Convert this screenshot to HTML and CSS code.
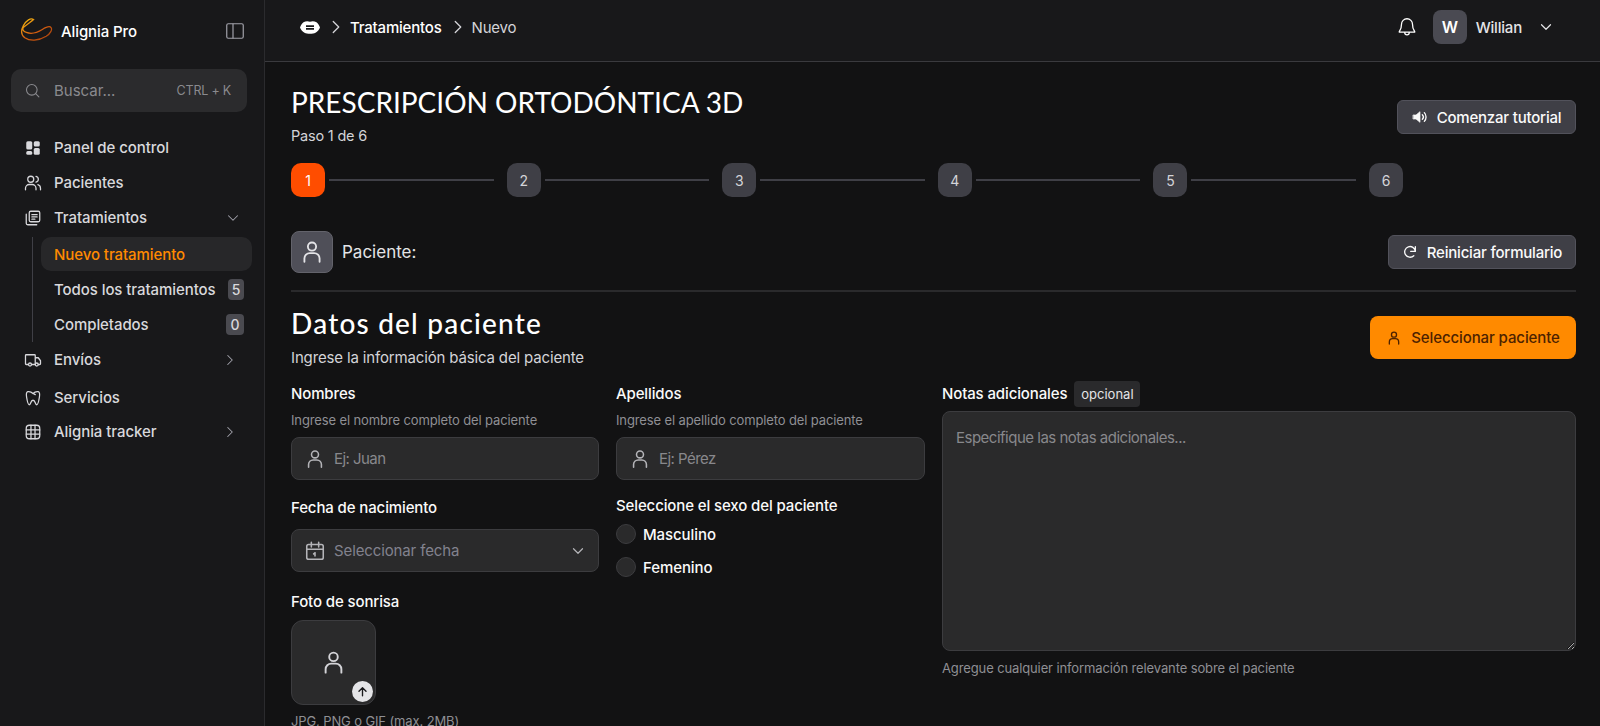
FILE: index.html
```html
<!DOCTYPE html>
<html lang="es">
<head>
<meta charset="utf-8">
<title>Alignia Pro</title>
<link rel="stylesheet" href="styles.css">
</head>
<body>
<svg class="sprite" width="0" height="0" aria-hidden="true">
  <defs>
    <symbol id="user" viewBox="0 0 24 24"><circle cx="12" cy="7" r="3.800"/><path d="M5 21v-3a5 5 0 0 1 5-5h4a5 5 0 0 1 5 5v3"/></symbol>
    <symbol id="right" viewBox="0 0 24 24"><path d="m9 6 6 6-6 6"/></symbol>
    <symbol id="down" viewBox="0 0 24 24"><path d="m6 9 6 6 6-6"/></symbol>
    <linearGradient id="logoGrad" x1="0" y1="0" x2="1" y2="1"><stop offset="0" stop-color="#f2c010"/><stop offset=".5" stop-color="#d8600f"/><stop offset="1" stop-color="#a03c0c"/></linearGradient>
  </defs>
</svg>
<aside class="sidebar">
  <div class="brand">
    <svg class="logo" viewBox="0 0 34 26" fill="none" stroke="url(#logoGrad)" stroke-width="1.300"><path d="M14 2.200C11 .2 6.500 3 3.500 8.500 .8 13.500 1 18 5 21c5 3.500 14 3.500 22-1.500 4.500-3 6.500-7 5-9-1.500-2-5-.5-9 2-4.500 2.800-11 5-16.500 3C3 14.500 2 11.500 4 10c3-2.500 8-6 10-7.800z"/></svg>
    <span class="brand-name">Alignia Pro</span>
    <svg class="ico panel-toggle" viewBox="0 0 18 16"><rect x=".75" y=".75" width="16.500" height="14.500" rx="1.500"/><path d="M7 1v14"/></svg>
  </div>
  <div class="search">
    <svg class="ico search-ico" viewBox="0 0 24 24"><circle cx="11" cy="11" r="7.500"/><path d="m21 21-4.500-4.500"/></svg>
    <span class="search-text">Buscar...</span>
    <span class="search-key">CTRL + K</span>
  </div>
  <nav class="nav">
    <a class="nav-item"><svg class="ico nav-ico solid" viewBox="0 0 24 24"><rect x="3" y="3" width="8" height="11" rx="2"/><rect x="13" y="3" width="8" height="7" rx="2"/><rect x="3" y="16" width="8" height="5" rx="2"/><rect x="13" y="12" width="8" height="9" rx="2"/></svg><span>Panel de control</span></a>
    <a class="nav-item"><svg class="ico nav-ico" viewBox="0 0 24 24"><circle cx="9" cy="7" r="4"/><path d="M2 21v-2a5 5 0 0 1 5-5h4a5 5 0 0 1 5 5v2M16 3.100a4 4 0 0 1 0 7.800M22 21v-2a5 5 0 0 0-3.500-4.800"/></svg><span>Pacientes</span></a>
    <a class="nav-item"><svg class="ico nav-ico" viewBox="0 0 24 24"><rect x="7" y="3" width="14" height="14" rx="2"/><path d="M3 7v12a2 2 0 0 0 2 2h12M10.500 7.500h7M10.500 10.500h7M10.500 13.500h4"/></svg><span>Tratamientos</span><svg class="ico chev"><use href="#down"/></svg></a>
    <div class="subnav">
      <a class="sub-item active"><span>Nuevo tratamiento</span></a>
      <a class="sub-item"><span>Todos los tratamientos</span><b class="count">5</b></a>
      <a class="sub-item"><span>Completados</span><b class="count">0</b></a>
    </div>
    <a class="nav-item"><svg class="ico nav-ico" viewBox="0 0 24 24"><path d="M6 18H3a1 1 0 0 1-1-1V6a1 1 0 0 1 1-1h11a1 1 0 0 1 1 1v12M15 9h4l3 4v4a1 1 0 0 1-1 1h-2M15 18H10"/><circle cx="8" cy="18" r="2"/><circle cx="17" cy="18" r="2"/></svg><span>Envíos</span><svg class="ico chev chev-r"><use href="#right"/></svg></a>
    <a class="nav-item services"><svg class="ico nav-ico" viewBox="0 0 24 24"><path d="M12 6c-2-2-4.500-3-7-2.500C3 4 3 8 3.500 11c.5 3 1.500 10 3.500 10 2.500 0 1.500-6 5-6s2.500 6 5 6c2 0 3-7 3.500-10 .5-3 .5-7-1.500-7.500C16.500 3 14 4 12 6zm0 0 3 1.500"/></svg><span>Servicios</span></a>
    <a class="nav-item"><svg class="ico nav-ico" viewBox="0 0 24 24"><rect x="3" y="3" width="18" height="18" rx="4"/><path d="M3 9.300h18M3 14.700h18M9.300 3v18M14.700 3v18"/></svg><span>Alignia tracker</span><svg class="ico chev chev-r"><use href="#right"/></svg></a>
  </nav>
</aside>
<div class="page">
  <header class="topbar">
    <svg class="lips" viewBox="0 0 20 13"><path fill-rule="evenodd" d="M10 .8C12-.2 14.500 0 16.500 1.300 18 2.300 19.300 4.500 20 6.500c-.7 2-2.500 4.200-4.500 5.200-2.500 1.500-8.500 1.500-11 0C2.500 10.700.7 8.500 0 6.500.7 4.500 2 2.300 3.500 1.300 5.500 0 8-.2 10 .8zM6 4.200h8V6H6zM6 7h8v1.800H6z"/></svg>
    <svg class="ico crumb-sep first"><use href="#right"/></svg>
    <span class="crumb strong">Tratamientos</span>
    <svg class="ico crumb-sep"><use href="#right"/></svg>
    <span class="crumb">Nuevo</span>
    <svg class="ico bell" viewBox="0 0 24 24"><path d="M6 9a6 6 0 0 1 12 0c0 6 2.500 7 2.500 8.500H3.500C3.500 16 6 15 6 9zM9.500 18a2.500 2.500 0 0 0 5 0"/></svg>
    <span class="avatar">W</span>
    <span class="username">Willian</span>
    <svg class="ico user-chev"><use href="#down"/></svg>
  </header>
  <main class="main">
    <div class="title-row">
      <div>
        <h1 class="title">PRESCRIPCIÓN ORTODÓNTICA 3D</h1>
        <p class="step-text">Paso 1 de 6</p>
      </div>
      <button class="btn tutorial"><svg class="btn-ico solid" viewBox="0 0 24 24"><path d="M2 9h4l6-5v16l-6-5H2z"/><path class="open" d="M15.500 8.500a5 5 0 0 1 0 7M18.500 5.500a9.500 9.500 0 0 1 0 13"/></svg>Comenzar tutorial</button>
    </div>
    <div class="stepper">
      <span class="step current">1</span><i class="line"></i>
      <span class="step">2</span><i class="line"></i>
      <span class="step">3</span><i class="line"></i>
      <span class="step">4</span><i class="line"></i>
      <span class="step">5</span><i class="line"></i>
      <span class="step">6</span>
    </div>
    <div class="patient-row">
      <span class="patient-box"><svg class="ico s26"><use href="#user"/></svg></span>
      <span class="patient-label">Paciente:</span>
      <button class="btn reset"><svg class="btn-ico" viewBox="0 0 24 24"><path d="M20 11a8 8 0 1 0-2.300 6.500M20 4v7h-7" /></svg>Reiniciar formulario</button>
    </div>
    <div class="section-head">
      <div>
        <h2 class="section-title">Datos del paciente</h2>
        <p class="section-sub">Ingrese la información básica del paciente</p>
      </div>
      <button class="btn primary"><svg class="btn-ico"><use href="#user"/></svg>Seleccionar paciente</button>
    </div>
    <form class="form-grid">
      <div class="col">
        <label class="label">Nombres</label>
        <p class="hint">Ingrese el nombre completo del paciente</p>
        <div class="field"><svg class="ico s22"><use href="#user"/></svg><input class="input" placeholder="Ej: Juan"></div>
        <label class="label mt-field">Fecha de nacimiento</label>
        <div class="field date">
          <svg class="ico s22" viewBox="0 0 24 24"><rect x="3" y="5" width="18" height="16" rx="2"/><path d="M8 2.500v5M16 2.500v5M3 10h18M12 14v3.500M10.500 15.200 12 14"/></svg>
          <span class="date-text">Seleccionar fecha</span>
          <svg class="ico date-chev"><use href="#down"/></svg>
        </div>
        <label class="label mt-photo">Foto de sonrisa</label>
        <div class="photo">
          <svg class="ico s27"><use href="#user"/></svg>
          <span class="upload"><svg viewBox="0 0 24 24"><path d="M12 20V5M5.500 11.500 12 5l6.500 6.500"/></svg></span>
        </div>
        <p class="hint photo-hint">JPG, PNG o GIF (max. 2MB)</p>
      </div>
      <div class="col">
        <label class="label">Apellidos</label>
        <p class="hint">Ingrese el apellido completo del paciente</p>
        <div class="field"><svg class="ico s22"><use href="#user"/></svg><input class="input" placeholder="Ej: Pérez"></div>
        <label class="label mt-sex">Seleccione el sexo del paciente</label>
        <div class="radio first"><span class="dot"></span>Masculino</div>
        <div class="radio"><span class="dot"></span>Femenino</div>
      </div>
      <div class="col">
        <div class="notes-label"><label class="label">Notas adicionales</label><span class="optional">opcional</span></div>
        <textarea class="notes" placeholder="Especifique las notas adicionales..."></textarea>
        <p class="hint notes-hint">Agregue cualquier información relevante sobre el paciente</p>
      </div>
    </form>
  </main>
</div>
</body>
</html>
```
FILE: styles.css
```css
* { box-sizing: border-box; }
html, body { margin: 0; height: 100%; overflow: hidden; }
body {
  display: flex;
  background: #121213;
  color: #fff;
  font-family: Inter, "Liberation Sans", sans-serif;
  font-size: 15px;
  letter-spacing: -.2px;
}
p, h1, h2 { margin: 0; font-weight: 400; }
a { display: block; }
.sprite { position: absolute; }
.ico { fill: none; stroke: currentColor; stroke-width: 1.7; stroke-linecap: round; stroke-linejoin: round; flex: none; }
.ico.solid { fill: currentColor; stroke: none; }
.s22 { width: 22px; height: 22px; }
.s26 { width: 26px; height: 26px; }
.s27 { width: 27px; height: 27px; }

/* sidebar */
.sidebar { width: 265px; flex: none; height: 100%; background: #18181a; border-right: 1px solid #2b2b2e; }
.brand { display: flex; align-items: center; height: 62px; padding: 0 20px; }
.logo { width: 33px; height: 26px; margin-right: 8px; margin-top: -3px; }
.brand-name { font-size: 15px; font-weight: 500; letter-spacing: -.1px; }
.panel-toggle { width: 18px; height: 16px; margin-left: auto; stroke-width: 1.2; color: #a1a1aa; }
.search { display: flex; align-items: center; height: 43px; margin: 7px 17px 0 11px; padding: 0 16px 0 13px; background: #2b2b2d; border-radius: 10px; color: #8a8a8e; }
.search-ico { width: 17px; height: 17px; stroke-width: 1.5; }
.search-text { margin-left: 13px; font-size: 15px; letter-spacing: 0; }
.search-key { margin-left: auto; font-size: 12.500px; letter-spacing: -.2px; }
.nav { margin-top: 18px; color: #d8d8dc; }
.nav-item { display: flex; align-items: center; height: 35px; padding: 0 22px 0 24px; font-size: 15px; font-weight: 500; letter-spacing: -.07px; }
.nav-ico { width: 18px; height: 18px; }
.nav-item > span { margin-left: 12px; }
.chev { width: 18px; height: 18px; margin-left: auto; color: #a1a1aa; stroke-width: 1.4; }
.chev-r { margin-right: 3px; }
.services { margin-top: 3px; margin-bottom: -1px; }
.subnav { margin: 2px 0 0 32px; padding: 0 12px 0 8px; border-left: 1px solid #3f3f46; }
.sub-item { display: flex; align-items: center; height: 35px; padding-left: 13px; padding-right: 8px; border-radius: 10px; font-size: 15px; font-weight: 500; letter-spacing: -.07px; justify-content: space-between; }
.sub-item.active { background: #272729; color: #ff8a00; height: 34px; margin: 1px 0; }
.count { display: grid; place-items: center; min-width: 16px; height: 21px; padding: 0 3px; background: #4a4a50; border-radius: 4px; font-size: 14px; font-weight: 500; }
.sub-item:last-child .count { min-width: 18px; }

/* top bar */
.page { flex: 1; min-width: 0; height: 100%; display: flex; flex-direction: column; }
.topbar { display: flex; align-items: center; flex: none; height: 62px; padding: 0 45px 7px 35px; background: #18181a; border-bottom: 1px solid #3a3a3e; }
.lips { width: 20px; height: 13px; fill: #fff; }
.crumb-sep { width: 22px; height: 22px; margin: 0 3px 0 5px; color: #d4d4d8; stroke-width: 1.4; }
.crumb-sep.first { margin-left: 5px; }
.crumb { font-size: 15px; color: #d4d4d8; }
.crumb.strong { font-weight: 500; color: #fff; }
.bell { width: 22px; height: 22px; margin-left: auto; stroke-width: 1.4; }
.avatar { display: grid; place-items: center; width: 34px; height: 34px; margin-left: 15px; background: #4a4a52; border-radius: 8px; font-size: 16px; font-weight: 600; }
.username { margin-left: 9px; font-size: 15px; font-weight: 500; color: #e4e4e7; }
.user-chev { width: 18px; height: 18px; margin-left: 15px; stroke-width: 1.6; color: #e4e4e7; }

/* main */
.main { flex: 1; min-height: 0; padding: 0 24px 0 26px; overflow: hidden; }
.title-row { display: flex; justify-content: space-between; align-items: flex-start; padding-top: 22px; }
.title { font-family: Lato, sans-serif; font-size: 28px; line-height: 36px; font-weight: 400; letter-spacing: 0; }
.step-text { margin-top: 6px; font-size: 14.500px; line-height: 20px; color: #d4d4d8; }
.btn { display: inline-flex; align-items: center; justify-content: center; gap: 9px; height: 34px; border: 1px solid #52525b; border-radius: 6px; background: #3f3f46; color: #fafafa; font: 500 15px Inter, sans-serif; letter-spacing: -.2px; padding: 0; }
.btn-ico { width: 16px; height: 16px; flex: none; fill: none; stroke: currentColor; stroke-width: 2; stroke-linecap: round; stroke-linejoin: round; }
.btn-ico.solid { fill: currentColor; stroke-width: 1; }
.btn-ico .open { fill: none; stroke-width: 2; }
.tutorial { width: 179px; margin-top: 16px; }
.stepper { display: flex; align-items: center; width: 1112px; margin-top: 17px; }
.step { display: grid; place-items: center; width: 34px; height: 34px; flex: none; background: #3f3f46; border-radius: 10px; font-size: 14px; color: #d4d4d8; }
.step.current { background: #ff4d00; color: #fff; }
.line { flex: 1; height: 2px; margin: 0 13px 0 4px; background: #3f3f46; }
.patient-row { display: flex; align-items: center; box-sizing: content-box; height: 42px; margin-top: 34px; padding-bottom: 17px; border-bottom: 2px solid #2a2a2c; }
.patient-box { display: grid; place-items: center; width: 42px; height: 42px; background: #4f4f58; border: 1px solid #63636b; border-radius: 8px; color: #e4e4e7; }
.patient-label { margin-left: 9px; font-size: 17px; letter-spacing: 0; color: #e4e4e7; }
.reset { width: 188px; margin-left: auto; }
.section-head { display: flex; justify-content: space-between; align-items: flex-start; padding-top: 13px; }
.section-title { font-family: Lato, sans-serif; font-size: 28px; line-height: 36px; font-weight: 500; letter-spacing: 1.2px; }
.section-sub { margin-top: 7px; font-size: 15px; line-height: 20px; letter-spacing: -.15px; color: #d4d4d8; }
.primary { width: 206px; height: 43px; margin-top: 11px; background: #ff8a00; border: 0; border-radius: 8px; color: #4d2200; gap: 9px; letter-spacing: -.1px; }
.form-grid { display: grid; grid-template-columns: 308px 309px 1fr; column-gap: 17px; margin-top: 16px; }
.col { min-width: 0; display: flex; flex-direction: column; }
.label { display: block; font-size: 15px; font-weight: 500; line-height: 20px; letter-spacing: -.12px; color: #fafafa; }
.hint { font-size: 13px; line-height: 16px; color: #8f8f94; margin-top: 8px; letter-spacing: -.12px; }
.field { display: flex; align-items: center; gap: 8px; height: 43px; margin-top: 9px; padding: 0 11px 0 12px; background: #2a2a2b; border: 1px solid #3c3c3f; border-radius: 8px; color: #b4b4b8; }
.input { flex: 1; min-width: 0; padding: 0; border: 0; outline: 0; background: none; color: #fff; font: 400 15px Inter, sans-serif; letter-spacing: -.55px; }
.input::placeholder { color: #88888c; opacity: 1; }
.mt-field { margin-top: 18px; }
.date { margin-top: 11px; }
.date-text { color: #82828e; font-size: 15px; letter-spacing: -.12px; }
.date-chev { width: 18px; height: 18px; margin-left: auto; stroke-width: 1.6; }
.mt-photo { margin-top: 20px; }
.photo { position: relative; display: grid; place-items: center; width: 85px; height: 85px; margin-top: 8px; background: #2a2a2b; border: 1px solid #3c3c3f; border-radius: 12px; color: #d4d4d8; }
.upload { position: absolute; right: 2px; bottom: 2px; display: grid; place-items: center; width: 21px; height: 21px; border-radius: 50%; background: #e4e4e7; }
.upload svg { width: 13px; height: 13px; fill: none; stroke: #18181b; stroke-width: 2.500; stroke-linecap: round; stroke-linejoin: round; }
.photo-hint { margin-top: 8px; }
.mt-sex { margin-top: 16px; }
.radio { display: flex; align-items: center; gap: 7px; height: 20px; margin-top: 13px; font-size: 15px; font-weight: 500; letter-spacing: -.08px; color: #fafafa; }
.radio.first { margin-top: 8px; }
.dot { width: 20px; height: 20px; background: #2a2a2b; border: 1px solid #3c3c3f; border-radius: 50%; }
.notes-label { display: flex; align-items: center; gap: 7px; height: 20px; }
.optional { display: grid; place-items: center; width: 66px; height: 26px; background: #2a2a2c; border-radius: 4px; font-size: 13px; color: #e4e4e7; letter-spacing: 0; }
.notes { display: block; width: 100%; height: 240px; margin-top: 7px; padding: 16px 13px; background: #2a2a2b; border: 1px solid #3c3c3f; border-radius: 8px; outline: 0; color: #fff; font: 400 15px Inter, sans-serif; letter-spacing: -.5px; }
.notes::placeholder { color: #88888c; opacity: 1; }
.notes-hint { margin-top: 9px; }
```
